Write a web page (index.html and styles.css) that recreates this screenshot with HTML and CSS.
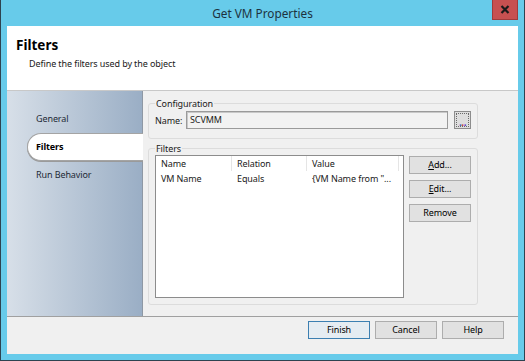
FILE: index.html
```html
<!DOCTYPE html>
<html>
<head>
<meta charset="utf-8">
<title>Get VM Properties</title>
<link rel="stylesheet" href="styles.css">
</head>
<body>
<div class="window">
  <div class="titlebar">
    <span class="title">Get VM Properties</span>
    <div class="close">
      <svg width="10" height="9" viewBox="0 0 10 9"><path d="M1.5 1 L8.5 8 M8.5 1 L1.5 8" stroke="#1a1a1a" stroke-width="2.2" fill="none"/></svg>
    </div>
  </div>
  <div class="client">
    <div class="header">
      <h1>Filters</h1>
      <p>Define the filters used by the object</p>
    </div>
    <div class="main">
      <nav class="nav">
        <div class="nav-item">General</div>
        <div class="nav-item active">Filters</div>
        <div class="nav-item">Run Behavior</div>
      </nav>
      <div class="content">
        <fieldset class="group config">
          <legend>Configuration</legend>
          <div class="name-row">
            <span class="label">Name:</span>
            <div class="textbox">SCVMM</div>
            <div class="browse"><span class="d1">.</span><span class="d2">.</span><span class="d3">.</span></div>
          </div>
        </fieldset>
        <fieldset class="group filters">
          <legend>Filters</legend>
          <div class="filters-body">
            <div class="listview">
              <div class="lv-row lv-head">
                <div class="c1">Name</div>
                <div class="c2">Relation</div>
                <div class="c3">Value</div>
              </div>
              <div class="lv-row">
                <div class="c1">VM Name</div>
                <div class="c2">Equals</div>
                <div class="c3">{VM Name from "...</div>
              </div>
            </div>
            <div class="side-buttons">
              <div class="btn"><u>A</u>dd...</div>
              <div class="btn"><u>E</u>dit...</div>
              <div class="btn">Remove</div>
            </div>
          </div>
        </fieldset>
      </div>
    </div>
    <div class="footer">
      <div class="btn default">Finish</div>
      <div class="btn">Cancel</div>
      <div class="btn">Help</div>
    </div>
  </div>
</div>
</body>
</html>
```
FILE: styles.css
```css
* { box-sizing: border-box; }
html, body { margin: 0; padding: 0; }
body {
  font-family: "Noto Sans", sans-serif;
  font-size: 9px;
  letter-spacing: -0.1px;
  color: #1a1a1a;
  background: #ffffff;
}
.window {
  width: 525px;
  height: 361px;
  background: #67cbea;
  border: 1px solid #2d4350;
  border-top: none;
  padding: 0 6px 6px 6px;
  display: flex;
  flex-direction: column;
}
.titlebar {
  height: 26px;
  display: grid;
  grid-template-columns: 1fr auto 1fr;
  align-items: start;
}
.title {
  grid-column: 2;
  font-size: 11.8px;
  letter-spacing: 0;
  line-height: 26px;
  color: #1d3340;
}
.close {
  grid-column: 3;
  justify-self: end;
  width: 26px;
  height: 20px;
  background: #c75050;
  border: 1px solid #9f3b3b;
  border-top: none;
  display: flex;
  align-items: center;
  justify-content: center;
}
.client {
  flex: 1;
  display: flex;
  flex-direction: column;
  background: #f0f0f0;
}
.header {
  height: 65px;
  background: #ffffff;
  border-bottom: 1px solid #c8c8c8;
  padding: 11px 0 0 9px;
}
.header h1 {
  margin: 0;
  font-size: 13.5px;
  letter-spacing: 0;
  line-height: 17px;
  font-weight: bold;
  color: #000;
}
.header p {
  margin: 4px 0 0 13px;
  line-height: 12px;
}
.main {
  display: flex;
  height: 225px;
}
.nav {
  width: 136px;
  background: linear-gradient(to right, #d7dfe8, #9aaec5);
  border-right: 1px solid #8e98a4;
  padding-top: 14px;
  display: flex;
  flex-direction: column;
}
.nav-item {
  height: 28px;
  line-height: 28px;
  padding-left: 29px;
  color: #1e2a36;
}
.nav-item.active {
  margin-left: 20px;
  margin-right: -1px;
  padding-left: 8px;
  background: #ffffff;
  border: 1px solid #a4a4a4;
  border-right: none;
  border-radius: 14px 0 0 14px;
  box-shadow: 0 1px 0 #9a9a9a;
  font-weight: bold;
  line-height: 26px;
  color: #000;
}
.content {
  flex: 1;
  padding: 6px 0 0 5px;
}
.group {
  width: 330px;
  margin: 0;
  border: 1px solid #dcdcdc;
  border-radius: 3px;
  padding: 0 6px 6px 6px;
}
.group legend {
  padding: 0 1px;
  line-height: 13px;
}
.config { padding-bottom: 9px; }
.name-row {
  display: flex;
  align-items: center;
  margin-top: 1px;
}
.label { width: 31px; }
.textbox {
  flex: 1;
  height: 18px;
  line-height: 16px;
  border: 1px solid #9a9a9a;
  box-shadow: inset 1px 1px 0 #c8c8c8;
  background: #f2f2f2;
  padding-left: 3px;
}
.browse {
  width: 17px;
  height: 18px;
  margin-left: 6px;
  background: #dedede;
  border: 1px solid #8c8c8c;
  outline: 1px dotted #6a6a6a;
  outline-offset: -3px;
  display: flex;
  justify-content: center;
  align-items: flex-end;
  font-size: 10px;
  font-weight: bold;
  line-height: 12px;
  letter-spacing: -0.5px;
}
.d1 { color: #3a5bc8; }
.d2 { color: #c83a3a; }
.d3 { color: #5a3ac8; }
.filters { margin-top: 3px; height: 163px; }
.filters-body {
  display: flex;
  gap: 5px;
  height: 143px;
}
.listview {
  width: 249px;
  background: #ffffff;
  border: 1px solid #8c8c8c;
}
.lv-row {
  display: grid;
  grid-template-columns: 76px 75px 92px;
  height: 15px;
  line-height: 15px;
}
.lv-row > div { padding-left: 5px; white-space: nowrap; overflow: hidden; }
.lv-head > div { border-right: 1px solid #e5e5e5; }
.side-buttons {
  display: flex;
  flex-direction: column;
  gap: 6px;
  padding-top: 1px;
}
.btn {
  width: 62px;
  height: 18px;
  line-height: 16px;
  text-align: center;
  border: 1px solid #adadad;
  background: #e1e1e1;
  color: #000;
}
.btn u { text-decoration: underline; }
.btn.default {
  border-color: #3c7fb1;
  background: #e5ecf2;
}
.footer {
  height: 38px;
  border-top: 1px solid #a0a0a0;
  display: flex;
  justify-content: flex-end;
  gap: 5px;
  padding: 4px 14px 0 0;
}
```
